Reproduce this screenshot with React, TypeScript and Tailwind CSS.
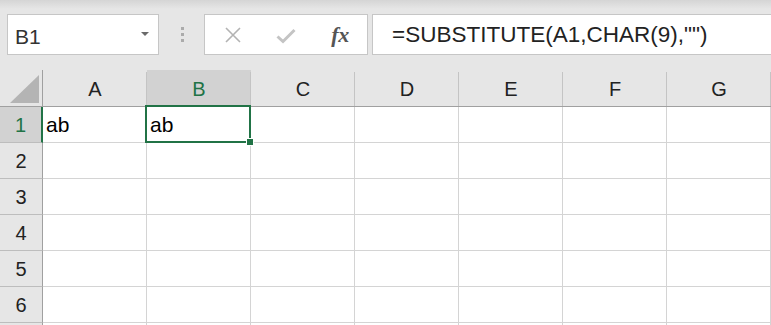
import React from "react";

const cols = ["A", "B", "C", "D", "E", "F", "G"];
const rows = [1, 2, 3, 4, 5, 6, 7];

export default function App() {
  return (
    <div className="w-[771px] h-[325px] overflow-hidden bg-white" style={{ fontFamily: '"Liberation Sans", "Noto Sans CJK JP", sans-serif' }}>
      {/* toolbar */}
      <div className="h-[70px] bg-[linear-gradient(#d5d5d5_0px,#e6e6e6_9px,#e6e6e6_100%)] flex items-start pt-[14px] pl-[7px]">
        <div className="w-[152px] h-[41px] bg-white border border-[#c6c6c6] flex items-center pl-[7px] pr-[9px] justify-between">
          <span className="text-[21px] text-[#333] leading-none mt-[3px]">B1</span>
          <svg width="8" height="4" viewBox="0 0 8 4" className="mb-[2px]">
            <path d="M0 0H8L4 4Z" fill="#6a6a6a" />
          </svg>
        </div>
        <div className="w-[45px] h-[41px] flex flex-col items-center justify-center gap-[3px] pl-[1px]">
          <div className="w-[3px] h-[3px] bg-[#ababab]" />
          <div className="w-[3px] h-[3px] bg-[#ababab]" />
          <div className="w-[3px] h-[3px] bg-[#ababab]" />
        </div>
        <div className="w-[164px] h-[41px] bg-white border border-[#c6c6c6] flex items-center">
          <div className="w-[54px] flex justify-center pl-[2px]">
            <svg width="18" height="18" viewBox="0 0 18 18">
              <path d="M2 2L16 16M16 2L2 16" stroke="#b3b3b3" strokeWidth="1.6" />
            </svg>
          </div>
          <div className="w-[54px] flex justify-center pt-[3px]">
            <svg width="20" height="16" viewBox="0 0 20 16">
              <path d="M1.5 8.5L7 13.5L18.5 2" stroke="#c4c4c4" strokeWidth="3" fill="none" />
            </svg>
          </div>
          <div className="w-[54px] flex justify-center">
            <span className="text-[22px] italic font-semibold text-[#555] leading-none tracking-[-0.5px]" style={{ fontFamily: '"Liberation Serif", "DejaVu Serif", serif' }}>fx</span>
          </div>
        </div>
        <div className="w-[4px]" />
        <div className="flex-1 h-[41px] bg-white border border-r-0 border-[#c6c6c6] flex items-center pl-[19px]">
          <span className="text-[22.5px] text-[#222] leading-none mt-[2px]">=SUBSTITUTE(A1,CHAR(9),"")</span>
        </div>
      </div>

      {/* grid */}
      <div className="grid grid-cols-[43px_repeat(7,104px)] text-[#222]">
        {/* corner */}
        <div className="h-[37px] bg-[#e6e6e6] border-b border-r border-[#a0a0a0] relative flex items-end justify-end pr-[3px] pb-[3px]">
          <svg width="29" height="28" viewBox="0 0 29 28">
            <path d="M29 0V28H0Z" fill="#b4b4b4" />
          </svg>
        </div>
        {cols.map((c) => (
          <div
            key={c}
            className={`h-[37px] border-b border-[#a0a0a0] flex items-center justify-center text-[20px] pt-[1px] ${
              c === "B" ? "bg-[#d2d2d2] text-[#217346]" : "bg-[#e6e6e6]"
            }`}
          >
            <div className="relative w-full h-full flex items-center justify-center">
              {c}
              <div className="absolute right-0 top-[1px] bottom-0 w-px bg-[#c4c4c4]" />
            </div>
          </div>
        ))}
        {rows.map((r) => (
          <React.Fragment key={r}>
            <div
              className={`h-[36px] border-b border-[#bdbdbd] flex items-center justify-center text-[20px] ${
                r === 1 ? "bg-[#d2d2d2] text-[#217346] border-r-2 border-r-[#217346]" : "bg-[#e6e6e6] border-r border-r-[#a0a0a0]"
              }`}
            >
              {r < 7 ? r : null}
            </div>
            {cols.map((c) => (
              <div key={c} className="h-[36px] border-b border-r border-[#d4d4d4] relative flex items-center pl-[3px] text-[21px] text-black">
                {r === 1 && (c === "A" || c === "B") ? <span className="mt-[1px]">ab</span> : null}
                {r === 1 && c === "B" ? (
                  <div className="absolute z-10 left-[-2px] top-[-2px] right-[-1px] bottom-[-1px] border-2 border-[#217346]">
                    <div className="absolute right-[-5px] bottom-[-5px] w-[8px] h-[8px] bg-[#217346] border border-white" />
                  </div>
                ) : null}
              </div>
            ))}
          </React.Fragment>
        ))}
      </div>
    </div>
  );
}
